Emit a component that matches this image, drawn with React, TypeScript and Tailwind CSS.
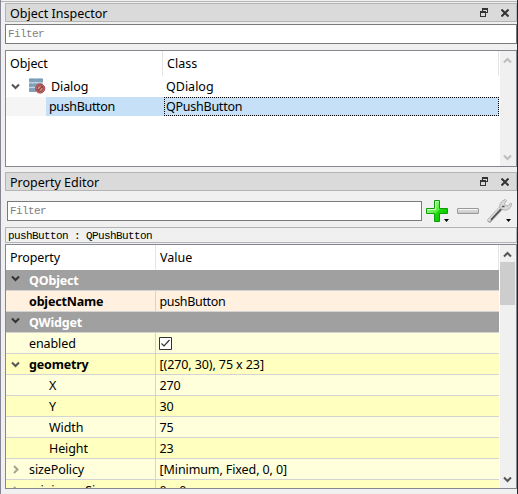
import React from "react";

const sans = "font-['Noto_Sans','Open_Sans',sans-serif]";
const mono = "font-['Liberation_Mono',monospace]";

function Chevron({ dir, className }: { dir: "up" | "down" | "right"; className?: string }) {
  const d = { up: "M1 6.5 4.5 3 8 6.5", down: "M1 2.5 4.5 6 8 2.5", right: "M3 1 6.5 4.5 3 8" }[dir];
  return (
    <svg width="9" height="9" viewBox="0 0 9 9" fill="none" stroke="currentColor" strokeWidth="2" className={className}>
      <path d={d} />
    </svg>
  );
}

function TitleBar({ title, className }: { title: string; className: string }) {
  return (
    <div className={`flex shrink-0 items-center border border-[#b4b4b4] bg-[#dadada] pl-1 ${className}`}>
      <span className="grow pt-[2px] text-[12.5px] leading-[17px] tracking-[0px]">{title}</span>
      <svg width="8" height="9" viewBox="0 0 8 9" className="mr-[13px] shrink-0" shapeRendering="crispEdges" fill="#333">
        <path d="M2 0h6v5H6V4h1V2H3v1H2z" />
        <path fillRule="evenodd" d="M0 3h6v6H0zM1 5v3h4V5z" />
      </svg>
      <svg width="8" height="8" viewBox="0 0 8 8" className="mr-[7px] shrink-0" stroke="#333" strokeWidth="2">
        <path d="M.5.5l7 7M7.5.5l-7 7" />
      </svg>
    </div>
  );
}

function FormIcon() {
  return (
    <svg width="17" height="16" viewBox="0 0 17 16">
      <rect width="14" height="14" fill="#cfdbe5" />
      <g fill="#7ea3bf" stroke="#5f84a0" strokeWidth=".5">
        <path d="M.5 1h6v2.8h-6zM7.5 1h6v2.8h-6zM.5 5.8h3v2.8h-3zM4.5 5.8h8v2.8h-8zM.5 10.6h6.5v2.8H.5z" />
      </g>
      <circle cx="11.2" cy="10.5" r="4.6" fill="#c46a68" stroke="#a84545" />
      <circle cx="11.2" cy="10.5" r="2.8" fill="#cf9a9a" stroke="#933c3c" />
      <path d="M9 12.8 13.5 8.3" stroke="#933c3c" strokeWidth="1.3" />
    </svg>
  );
}

function ToolIcons() {
  return (
    <svg width="94" height="30" viewBox="0 0 94 30" className="shrink-0">
      <defs>
        <linearGradient id="green" x1="0" y1="0" x2="1" y2="1">
          <stop offset="0" stopColor="#c5ffbc" />
          <stop offset=".5" stopColor="#57ed3c" />
          <stop offset=".55" stopColor="#18d907" />
          <stop offset="1" stopColor="#08bd00" />
        </linearGradient>
        <linearGradient id="silver" x1="0" y1="0" x2="0" y2="1">
          <stop offset="0" stopColor="#e5e5e5" />
          <stop offset="1" stopColor="#c5c5c5" />
        </linearGradient>
      </defs>
      <path d="M10.5 4.5h5v8h8v5h-8v8h-5v-8h-8v-5h8z" fill="url(#green)" stroke="#0a9f08" strokeLinejoin="round" />
      <path d="M3.5 13.5h8v-8h3" stroke="#d2ffca" fill="none" />
      <path d="M20 23h5l-2.5 3zM82 23h5l-2.5 3z" fill="#000" />
      <rect x="33.5" y="12.5" width="21" height="5" rx=".5" fill="url(#silver)" stroke="#999" />
      <path d="M34.5 13.5h19" stroke="#f2f2f2" />
      <path d="M65.5 24.5 79 10" stroke="#a0a0a0" strokeWidth="4.4" strokeLinecap="round" />
      <path d="M65.2 24 78.5 9.5" stroke="#dedede" strokeWidth="2.4" strokeLinecap="round" />
      <path d="M67 23.7 78 12" stroke="#4e4e4e" strokeWidth="1.6" />
      <path d="M76.5 13c-2-4 .2-8 5-9.5l1 1-2 3 1 2 2.5.4L86.5 7l1 .5c0 4-3 7-7 6.6z" fill="#dadada" stroke="#a5a5a5" strokeWidth=".8" />
      <path d="M78 10.5h2.5" stroke="#555" strokeWidth="1.5" />
    </svg>
  );
}

function Scrollbar({ thumb }: { thumb?: boolean }) {
  return (
    <div className={`flex w-[15px] shrink-0 flex-col items-center bg-[#f0f0f0] ${thumb ? "text-[#555]" : "text-[#bdbdbd]"}`}>
      <Chevron dir="up" className="mt-[5px] shrink-0" />
      {thumb && <div className="mt-[3px] h-[43px] w-full shrink-0 bg-[#cdcdcd]" />}
      <Chevron dir="down" className="mt-auto mb-[4px] shrink-0" />
    </div>
  );
}

type Row = { name: string; value?: string; tight?: boolean; kind?: "group" | "child"; open?: boolean; arrow?: boolean; bold?: boolean; check?: boolean; bg: string };
const rows: Row[] = [
  { name: "QObject", kind: "group", open: true, bold: true, bg: "bg-[#a0a0a0]" },
  { name: "objectName", value: "pushButton", tight: true, bold: true, bg: "bg-[#fff0df]" },
  { name: "QWidget", kind: "group", open: true, bold: true, bg: "bg-[#a0a0a0]" },
  { name: "enabled", check: true, bg: "bg-[#ffffdc]" },
  { name: "geometry", value: "[(270, 30), 75 x 23]", open: true, bold: true, bg: "bg-[#ffffbf]" },
  { name: "X", value: "270", kind: "child", bg: "bg-[#ffffdc]" },
  { name: "Y", value: "30", kind: "child", bg: "bg-[#ffffbf]" },
  { name: "Width", value: "75", kind: "child", bg: "bg-[#ffffdc]" },
  { name: "Height", value: "23", kind: "child", bg: "bg-[#ffffbf]" },
  { name: "sizePolicy", value: "[Minimum, Fixed, 0, 0]", arrow: true, bg: "bg-[#ffffdc]" },
  { name: "minimumSize", value: "0 x 0", arrow: true, bg: "bg-[#ffffbf]" },
];

function PropertyRow({ row }: { row: Row }) {
  const group = row.kind === "group";
  return (
    <div className={`flex h-[21px] shrink-0 border-b border-[#d4d4d4] ${row.bg} ${group ? "text-white" : ""}`}>
      <div className={`flex w-[150px] shrink-0 ${group ? "" : "border-r border-[#d4d4d4]"}`}>
        <span className={`w-[23px] shrink-0 pl-[5px] ${row.arrow ? "pt-[6px] text-[#a5a58b]" : group ? "pt-[4px] text-[#333]" : "pt-[6px] text-[#555]"}`}>
          {(row.open || row.arrow) && <Chevron dir={row.open ? "down" : "right"} />}
        </span>
        <span className={`leading-[22px] ${row.bold ? "font-bold tracking-[-0.18px]" : "tracking-[-0.1px]"} ${row.kind === "child" ? "pl-5" : ""}`}>{row.name}</span>
      </div>
      {row.check ? (
        <svg width="13" height="13" viewBox="0 0 13 13" className="mt-[4px] ml-[3px]" fill="none">
          <path d="M.5.5h12v12H.5z" fill="#fff" stroke="#333" />
          <path d="M2.5 6.5 5 9l5.5-6" stroke="#333" strokeWidth="1.2" />
        </svg>
      ) : (
        <span className={`pl-[3.5px] leading-[22px] ${row.tight ? "tracking-[-0.35px]" : "tracking-[-0.1px]"}`}>{row.value}</span>
      )}
    </div>
  );
}

export default function App() {
  return (
    <div className={`flex h-[494px] w-[518px] flex-col overflow-hidden border-r border-l border-r-[#25262b] border-l-[#858593] bg-[#f0f0f0] pl-1 text-[12.5px] whitespace-pre text-black ${sans}`}>
      <div className="-ml-1 mt-px mb-px h-px shrink-0 bg-[#b4b4b4]" />
      <TitleBar title="Object Inspector" className="h-[19px]" />
      <div className={`mt-[2px] flex h-5 shrink-0 items-center border border-[#7a7a7a] bg-white pt-px pl-[2px] text-[11px] tracking-[-0.6px] text-[#808080] ${mono}`}>Filter</div>
      <div className="mt-[6px] flex h-[117px] shrink-0 border border-[#828790] bg-white">
        <div className="flex grow flex-col">
          <div className="flex h-[25px] shrink-0 border-r border-[#e5e5e5] leading-[26px]">
            <div className="w-[157px] border-r border-[#e5e5e5] pl-1 tracking-[-0.1px]">Object</div>
            <div className="pl-1">Class</div>
          </div>
          <div className="flex h-[21px] shrink-0 leading-[22px]">
            <div className="flex w-[157px] shrink-0">
              <Chevron dir="down" className="mt-[6px] ml-[5px] text-[#555]" />
              <span className="mt-[2px] ml-[9px]"><FormIcon /></span>
              <span className="ml-[5px] tracking-[-0.1px]">Dialog</span>
            </div>
            <span className="pl-[3px]">QDialog</span>
          </div>
          <div className="flex h-[19px] shrink-0 leading-[20px]">
            <div className="w-10 shrink-0 bg-[#f5f5f5]" />
            <div className="w-[118px] shrink-0 bg-[#c6e0f7] pl-[3px] tracking-[-0.35px]">pushButton</div>
            <div className="flex grow items-center border border-dotted border-black bg-[#c6e0f7] pl-px tracking-[-0.25px]">QPushButton</div>
          </div>
        </div>
        <div className="w-px shrink-0" />
        <Scrollbar />
        <div className="w-px shrink-0 bg-[#f0f0f0]" />
      </div>

      <TitleBar title="Property Editor" className="mt-[5px] h-[19px]" />
      <div className="flex h-9 shrink-0 items-start pt-[5px] pl-[2px]">
        <div className={`mt-[5px] flex h-5 w-[415px] shrink-0 items-center border border-[#7a7a7a] bg-white pt-px pl-[2px] text-[11px] tracking-[-0.6px] text-[#808080] ${mono}`}>Filter</div>
        <span className="ml-[2px] h-[30px] w-[92px] shrink-0"><ToolIcons /></span>
      </div>
      <div className={`flex h-4 shrink-0 items-center border border-[#b4b4b4] pt-[2px] pl-[2px] text-[11px] tracking-[-0.6px] ${mono}`}>pushButton : QPushButton</div>
      <div className="mt-px flex h-[245px] shrink-0 border border-[#828790] bg-white">
        <div className="flex grow flex-col overflow-hidden">
          <div className="flex h-[25px] shrink-0 border-r border-[#e5e5e5] leading-[26px]">
            <div className="w-[150px] border-r border-[#e5e5e5] pl-1 tracking-[-0.1px]">Property</div>
            <div className="pl-1">Value</div>
          </div>
          {rows.map((row) => <PropertyRow key={row.name} row={row} />)}
        </div>
        <div className="w-px shrink-0" />
        <Scrollbar thumb />
        <div className="w-px shrink-0 bg-[#f0f0f0]" />
      </div>
    </div>
  );
}
